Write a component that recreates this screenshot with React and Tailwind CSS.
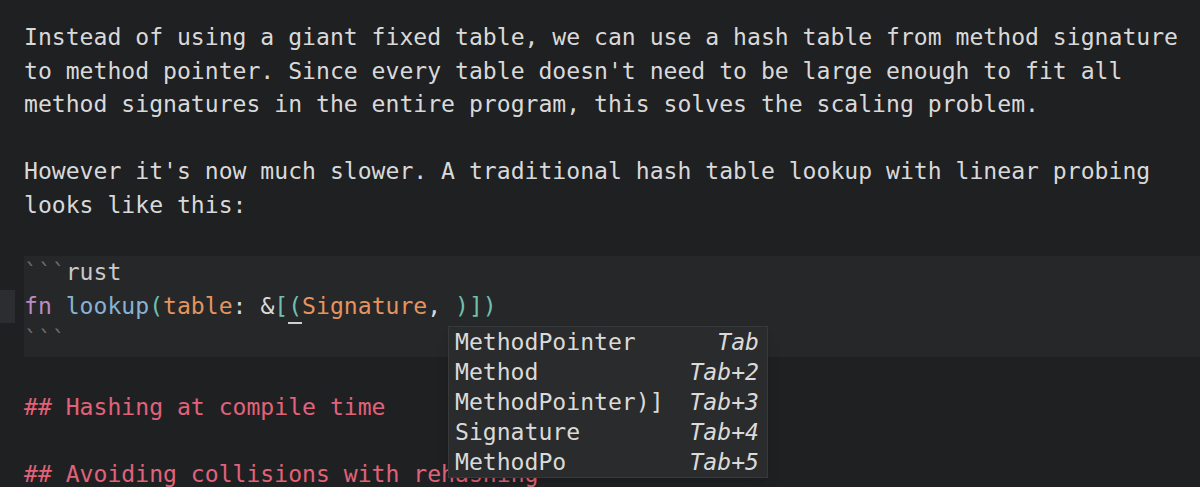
const mono = { fontFamily: '"DejaVu Sans Mono", "Liberation Mono", monospace' };

const Line = ({ children, className = "" }) => (
  <div className={`h-[33.6px] leading-[33.6px] whitespace-pre ${className}`}>{children}</div>
);

const completions = [
  ["MethodPointer", "Tab"],
  ["Method", "Tab+2"],
  ["MethodPointer)]", "Tab+3"],
  ["Signature", "Tab+4"],
  ["MethodPo", "Tab+5"],
];

const App = () => {
  return (
    <div
      className="relative h-[487px] w-[1200px] overflow-hidden bg-[#1f2022] pt-[21px] text-[23.1px] text-[#d9d9d9] antialiased"
      style={mono}
    >
      <div className="pl-6">
        <Line>Instead of using a giant fixed table, we can use a hash table from method signature</Line>
        <Line>to method pointer. Since every table doesn't need to be large enough to fit all</Line>
        <Line>method signatures in the entire program, this solves the scaling problem.</Line>
        <Line> </Line>
        <Line>However it's now much slower. A traditional hash table lookup with linear probing</Line>
        <Line>looks like this:</Line>
        <Line> </Line>
      </div>

      <div className="flex">
        <div className="flex w-6 flex-col pt-[33.6px]">
          <div className="h-[33.6px] w-[15px] bg-[#2c2d30]" />
        </div>
        <div className="flex-1 bg-[#262729]">
          <Line>
            <span className="text-[#6b6c6e]">```</span>
            <span className="text-[#c9c9c9]">rust</span>
          </Line>
          <Line>
            <span className="text-[#b98cc4]">fn</span>{" "}
            <span className="text-[#86b3d4]">lookup</span>
            <span className="text-[#6fc0ae]">(</span>
            <span className="text-[#e4945c]">table</span>
            <span>: &amp;</span>
            <span className="text-[#6fc0ae]">[</span>
            <span className="inline-block border-b-2 border-[#cfcfcf] leading-[31px] text-[#6fc0ae]">(</span>
            <span className="text-[#e4945c]">Signature</span>
            <span>, </span>
            <span className="text-[#6fc0ae]">)])</span>
          </Line>
          <Line>
            <span className="text-[#6b6c6e]">```</span>
          </Line>
        </div>
      </div>

      <div className="pl-6 text-[#e2627a]">
        <Line> </Line>
        <Line>## Hashing at compile time</Line>
        <Line> </Line>
        <Line>## Avoiding collisions with rehashing</Line>
      </div>

      <div className="absolute left-[448px] top-[326px] w-[320px] border border-[#38393b] bg-[#2a2b2d] pl-[6px] pr-[8px] text-[#dadada] shadow-lg">
        {completions.map(([label, key]) => (
          <div key={label} className="flex h-[30px] items-center justify-between whitespace-pre leading-[30px]">
            <span>{label}</span>
            <span className="italic">{key}</span>
          </div>
        ))}
      </div>
    </div>
  );
};

export default App;
